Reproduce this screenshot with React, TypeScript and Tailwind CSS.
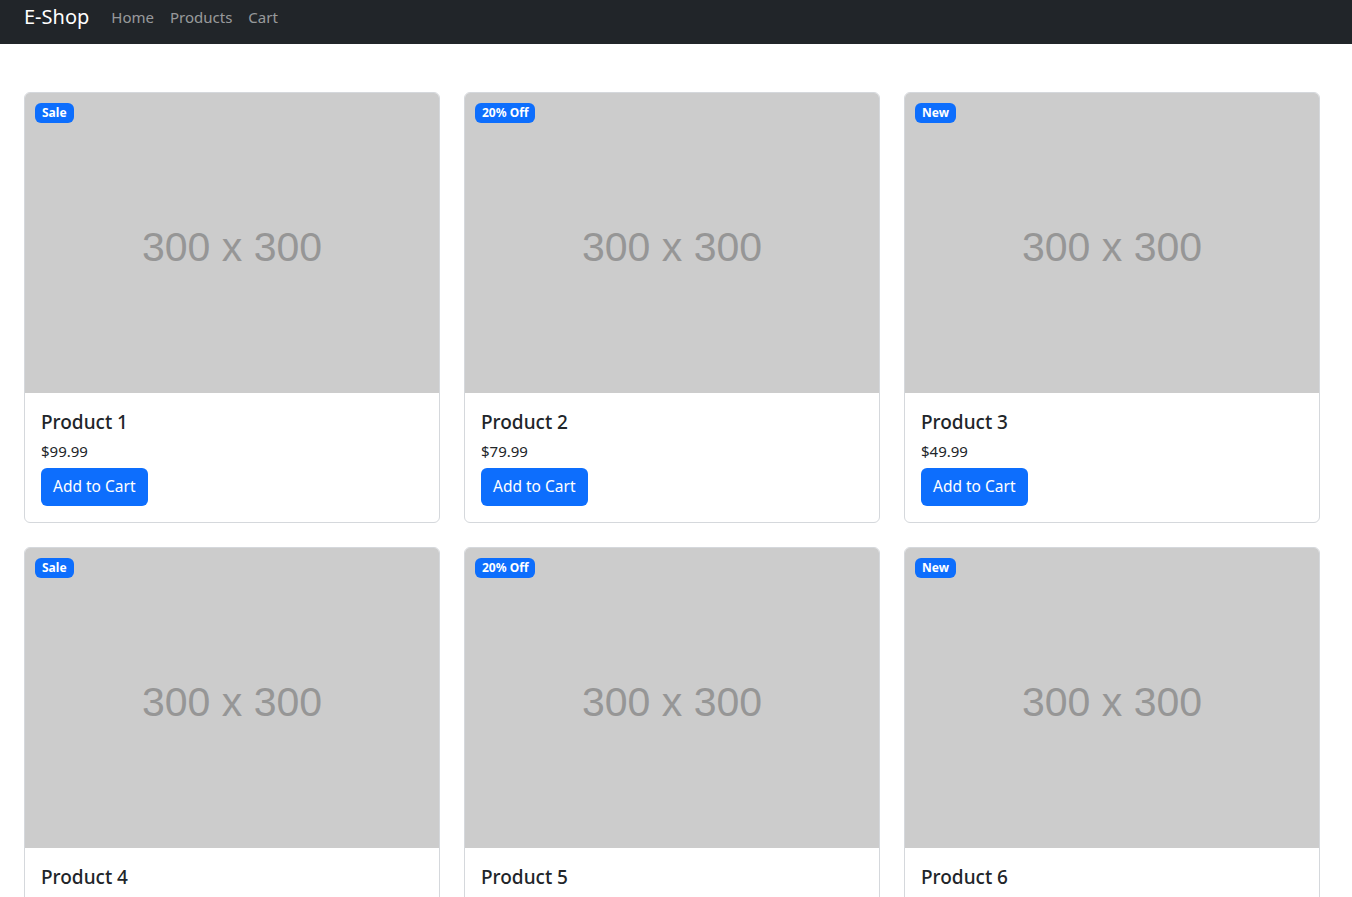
import React from "react";

const products = [
  { name: "Product 1", price: "$99.99", badge: "Sale" },
  { name: "Product 2", price: "$79.99", badge: "20% Off" },
  { name: "Product 3", price: "$49.99", badge: "New" },
  { name: "Product 4", price: "$39.99", badge: "Sale" },
  { name: "Product 5", price: "$29.99", badge: "20% Off" },
  { name: "Product 6", price: "$19.99", badge: "New" },
];

export default function App() {
  return (
    <div className="min-h-screen bg-white text-[#212529]" style={{ fontFamily: '"Noto Sans", "Open Sans", sans-serif' }}>
      <nav className="h-[44px] bg-[#212529] flex items-center px-[24px]">
        <span className="text-white text-[20px] mr-[22px] leading-none -mt-[10px]">E-Shop</span>
        <div className="flex gap-[16px] text-[15px] text-[rgba(255,255,255,0.55)] -mt-[10px]">
          <span>Home</span>
          <span>Products</span>
          <span>Cart</span>
        </div>
      </nav>
      <div className="pl-[24px] pt-[48px] w-[1320px]">
        <div className="grid grid-cols-3 gap-x-[24px] gap-y-[24px]">
          {products.map((p) => (
            <div key={p.name} className="relative border border-[#d5d8dc] rounded-[6px] overflow-hidden bg-white">
              <div className="h-[300px] bg-[#cccccc] flex items-center justify-center">
                <span className="text-[41px] text-[#969696] mt-[10px]" style={{ fontFamily: '"Liberation Sans", Arial, sans-serif' }}>
                  300 x 300
                </span>
              </div>
              <span className="absolute top-[10px] left-[10px] h-[20px] px-[7px] flex items-center rounded-[6px] bg-[#0d6efd] text-white text-[12px] font-bold">
                {p.badge}
              </span>
              <div className="px-[16px] pt-[17px] pb-[16px]">
                <div className="text-[19px] leading-[24px] font-medium">{p.name}</div>
                <div className="text-[15px] leading-[24px] mt-[5px]">{p.price}</div>
                <button className="mt-[5px] h-[38px] px-[12px] rounded-[6px] bg-[#0d6efd] text-white text-[15.5px]">
                  Add to Cart
                </button>
              </div>
            </div>
          ))}
        </div>
      </div>
    </div>
  );
}
